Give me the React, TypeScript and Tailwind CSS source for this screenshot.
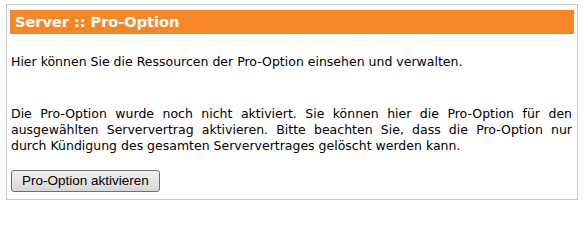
export default function App() {
  return (
    <div className="w-[584px] h-[208px] bg-white pt-[4px] pl-[6px] font-['DejaVu_Sans',sans-serif] text-[12.5px] leading-[16px] text-black">
      <div className="w-[572px] h-[196px] border border-[#c8c8c8] px-[3px] pt-[5px]">
        <div className="h-[24px] bg-[#f7862a] flex items-center pl-[5px]">
          <h1 className="text-[14.5px] font-bold text-white leading-none">Server :: Pro-Option</h1>
        </div>
        <p className="mt-[20px] pl-[1px]">Hier können Sie die Ressourcen der Pro-Option einsehen und verwalten.</p>
        <p className="mt-[36px] pl-[1px] pr-[2px] text-justify">
          Die Pro-Option wurde noch nicht aktiviert. Sie können hier die Pro-Option für den ausgewählten Serververtrag aktivieren. Bitte beachten Sie, dass die Pro-Option nur durch Kündigung des gesamten Serververtrages gelöscht werden kann.
        </p>
        <button className="mt-[16px] ml-[1px] h-[22px] px-[10px] border border-[#707070] rounded-[3px] bg-gradient-to-b from-[#f2f2f2] to-[#d6d6d6] font-['Liberation_Sans',sans-serif] text-[13.5px] text-black">
          Pro-Option aktivieren
        </button>
      </div>
    </div>
  );
}
